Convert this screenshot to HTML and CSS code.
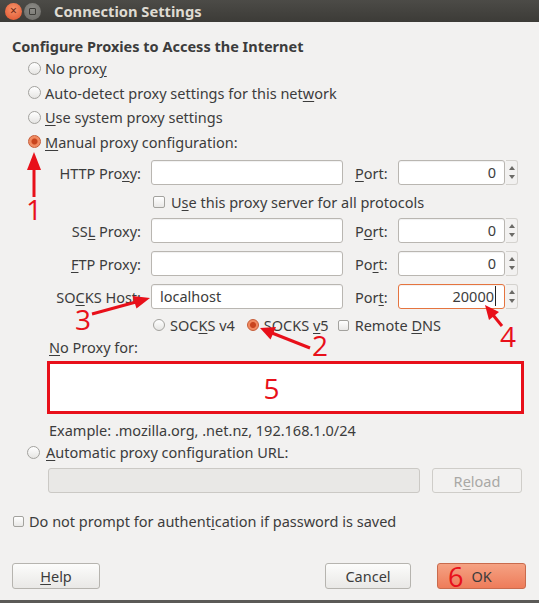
FILE: index.html
```html
<!DOCTYPE html>
<html>
<head>
    <title>Connection Settings</title>
    <link rel="stylesheet" href="styles.css">
</head>
<body>
    <div class="window">
        <div class="titlebar">
            <span class="wbtn close">×</span>
            <span class="wbtn min"><span></span></span>
            <span class="title">Connection Settings</span>
        </div>
        <div class="content">
            <h1>Configure Proxies to Access the Internet</h1>
            <div class="options">
                <div class="opt"><span class="radio"></span><span>No prox<u>y</u></span></div>
                <div class="opt"><span class="radio"></span><span>Auto-detect proxy settings for this net<u>w</u>ork</span></div>
                <div class="opt"><span class="radio"></span><span><u>U</u>se system proxy settings</span></div>
                <div class="opt"><span class="radio on"></span><span><u>M</u>anual proxy configuration:</span></div>
            </div>

            <div class="manual">
                <label class="lbl">HTTP Pro<u>x</u>y:</label>
                <div class="field"></div>
                <label class="port-lbl"><u>P</u>ort:</label>
                <div class="spin"><div class="field num">0</div><div class="arrows"><i class="up"></i><i class="down"></i></div></div>

                <div class="all-protocols"><span class="check"></span><span>U<u>s</u>e this proxy server for all protocols</span></div>

                <label class="lbl">SS<u>L</u> Proxy:</label>
                <div class="field"></div>
                <label class="port-lbl">P<u>o</u>rt:</label>
                <div class="spin"><div class="field num">0</div><div class="arrows"><i class="up"></i><i class="down"></i></div></div>

                <label class="lbl"><u>F</u>TP Proxy:</label>
                <div class="field"></div>
                <label class="port-lbl">Po<u>r</u>t:</label>
                <div class="spin"><div class="field num">0</div><div class="arrows"><i class="up"></i><i class="down"></i></div></div>

                <label class="lbl">SO<u>C</u>KS Host:</label>
                <div class="field text">localhost</div>
                <label class="port-lbl">Por<u>t</u>:</label>
                <div class="spin"><div class="field num focus"><span class="caret">20000</span></div><div class="arrows"><i class="up"></i><i class="down"></i></div></div>

                <div class="socks">
                    <span class="sock v4"><span class="radio"></span><span>SOC<u>K</u>S v4</span></span>
                    <span class="sock v5"><span class="radio on"></span><span>SOCKS <u>v</u>5</span></span>
                    <span class="sock"><span class="check"></span><span>Remote <u>D</u>NS</span></span>
                </div>
            </div>

            <div class="noproxy-lbl"><u>N</u>o Proxy for:</div>
            <div class="noproxy"><span class="mark">5</span></div>
            <div class="example">Example: .mozilla.org, .net.nz, 192.168.1.0/24</div>

            <div class="opt auto"><span class="radio"></span><span><u>A</u>utomatic proxy configuration URL:</span></div>
            <div class="url-row">
                <div class="field disabled"></div>
                <button class="btn reload" disabled>R<u>e</u>load</button>
            </div>

            <div class="no-prompt"><span class="check"></span><span>Do not prompt for authent<u>i</u>cation if password is saved</span></div>

            <div class="buttons">
                <button class="btn help"><u>H</u>elp</button>
                <div class="right">
                    <button class="btn">Cancel</button>
                    <button class="btn ok"><span class="mark">6</span><span>OK</span></button>
                </div>
            </div>
        </div>

        <!-- annotations drawn over the dialog -->
        <svg class="notes" width="539" height="603" viewBox="0 0 539 603">
            <g stroke="#e8101a" stroke-width="3" fill="#e8101a">
                <line x1="34" y1="197" x2="34" y2="166"/>
                <polygon points="34,152 27,170 41,170" stroke="none"/>
                <line x1="92" y1="314" x2="136" y2="302"/>
                <polygon points="150,298 136.5,308.5 132.5,296" stroke="none"/>
                <line x1="310" y1="348" x2="272" y2="333"/>
                <polygon points="260,328 276,327 270.5,339.5" stroke="none"/>
                <line x1="502" y1="326" x2="493" y2="315"/>
                <polygon points="485,305 499,312 489,320" stroke="none"/>
            </g>
            <g class="digits" fill="#e8101a">
                <text x="34" y="220">1</text>
                <text x="83" y="330">3</text>
                <text x="320" y="356">2</text>
                <text x="508" y="347">4</text>
            </g>
        </svg>
    </div>
</body>
</html>
```

FILE: styles.css
```css
* { box-sizing: border-box; }
body { margin: 0; font-family: "Noto Sans", "Open Sans", sans-serif; font-size: 14.5px; color: #3c3c3c; }
u { text-decoration: underline; text-underline-offset: 2px; }

.window { position: relative; width: 539px; height: 603px; background: #f2f1f0; border-bottom: 3px solid #5b5a57; overflow: hidden; }

.titlebar { height: 22px; display: flex; align-items: center; padding-left: 5px; background: linear-gradient(#4c4b47, #3c3b37); }
.wbtn { width: 17px; height: 17px; border-radius: 50%; display: flex; align-items: center; justify-content: center; }
.close { background: radial-gradient(circle at 50% 35%, #f7936a, #e0522c); color: #6b2614; font-size: 12px; line-height: 1; }
.min { margin-left: 2px; background: radial-gradient(circle at 50% 35%, #8d8c87, #6a6965); }
.min span { width: 7px; height: 7px; border: 1px solid #3e3d39; border-radius: 1px; }
.title { margin-left: 13px; color: #dfdbd2; font-weight: bold; font-size: 14.7px; }

.content { padding: 0 13px 0 12px; }
h1 { margin: 15px 0 0; font-size: 14.5px; line-height: 18px; font-weight: bold; }

.options { margin-top: 1px; }
.opt { height: 24.5px; display: flex; align-items: center; padding-left: 16px; }
.radio { width: 13px; height: 13px; border-radius: 50%; border: 1px solid #a3a29e; background: linear-gradient(#ffffff, #e6e5e3); margin-right: 4px; flex: none; }
.radio.on { border-color: #c65a35; background: radial-gradient(circle, #c8441d 0 2.5px, #f0875d 3.5px, #f39a74); }
.check { width: 12px; height: 12px; border-radius: 2px; border: 1px solid #a3a29e; background: linear-gradient(#ffffff, #e9e8e6); margin-right: 6px; flex: none; }

.manual { display: grid; grid-template-columns: 139px 192px 55px 120px; row-gap: 8px; margin-top: 6px; align-items: center; }
.lbl { text-align: right; padding-right: 10px; white-space: nowrap; }
.port-lbl { padding-left: 12px; }
.field { height: 25px; background: #fff; border: 1px solid #b9b6b1; border-radius: 3px; box-shadow: inset 0 1px 1px rgba(0, 0, 0, 0.06); }
.field.text { padding-left: 8px; line-height: 23px; }
.spin { display: flex; align-items: center; }
.spin .field { width: 107px; }
.num { text-align: right; padding-right: 8px; line-height: 23px; }
.focus { border-color: #e5743f; }
.caret { border-right: 1px solid #222; padding-right: 1px; }
.arrows { width: 12px; height: 25px; margin-left: 1px; border: 1px solid #d4d2ce; border-left: none; border-radius: 0 3px 3px 0; display: flex; flex-direction: column; align-items: center; justify-content: center; gap: 5px; }
.arrows i { width: 0; height: 0; border-left: 3px solid transparent; border-right: 3px solid transparent; }
.arrows .up { border-bottom: 4px solid #6b6a66; }
.arrows .down { border-top: 4px solid #6b6a66; }

.all-protocols { grid-column: 2 / 5; height: 17px; display: flex; align-items: center; padding-left: 2px; }
.socks { grid-column: 2 / 5; height: 16px; display: flex; align-items: center; padding-left: 2px; }
.sock { display: flex; align-items: center; }
.sock .radio { width: 12px; height: 12px; margin-right: 5px; }
.sock .check { width: 11px; height: 11px; }
.v4 { margin-right: 12px; }
.v5 { margin-right: 9px; }

.noproxy-lbl { margin: 5px 0 0 37px; line-height: 18px; }
.noproxy { margin: 5px 0 0 35px; width: 477px; height: 53px; background: #fff; border: 3px solid #e8101a; display: flex; align-items: center; justify-content: center; padding-right: 28px; }
.mark { color: #e8101a; font-family: "Open Sans", "Noto Sans", sans-serif; font-size: 28px; line-height: 1; }
.example { margin: 7px 0 0 37px; line-height: 18px; }

.opt.auto { height: 18px; margin-top: 4px; padding-left: 15px; }
.opt.auto .radio { margin-right: 6px; }
.url-row { display: flex; gap: 12px; margin: 7px 0 0 36px; }
.field.disabled { width: 372px; background: #e9e8e6; border-color: #cbc9c5; box-shadow: none; }

.btn { height: 26px; font-family: inherit; font-size: 14.5px; color: #3c3c3c; background: linear-gradient(#fcfcfb, #e9e8e6); border: 1px solid #b6b4af; border-radius: 3px; padding: 0; }
.reload { width: 90px; height: 25px; color: #a9a8a5; background: #f2f1f0; border-color: #cfcdc9; }

.no-prompt { height: 18px; margin: 19px 0 0 1px; display: flex; align-items: center; }
.no-prompt .check { width: 11px; height: 11px; margin-right: 5px; }

.buttons { display: flex; justify-content: space-between; margin-top: 33px; }
.help { width: 88px; }
.right { display: flex; gap: 26px; }
.right .btn { width: 86px; }
.right .ok { width: 89px; display: flex; align-items: center; padding-left: 10px; gap: 8px; background: linear-gradient(#f5a283, #ee7c5a); border-color: #c96b4d; }
.ok .mark { font-size: 27px; }

.notes { position: absolute; left: 0; top: 0; pointer-events: none; }
.digits { font-family: "Open Sans", "Noto Sans", sans-serif; font-size: 28px; text-anchor: middle; }
```
